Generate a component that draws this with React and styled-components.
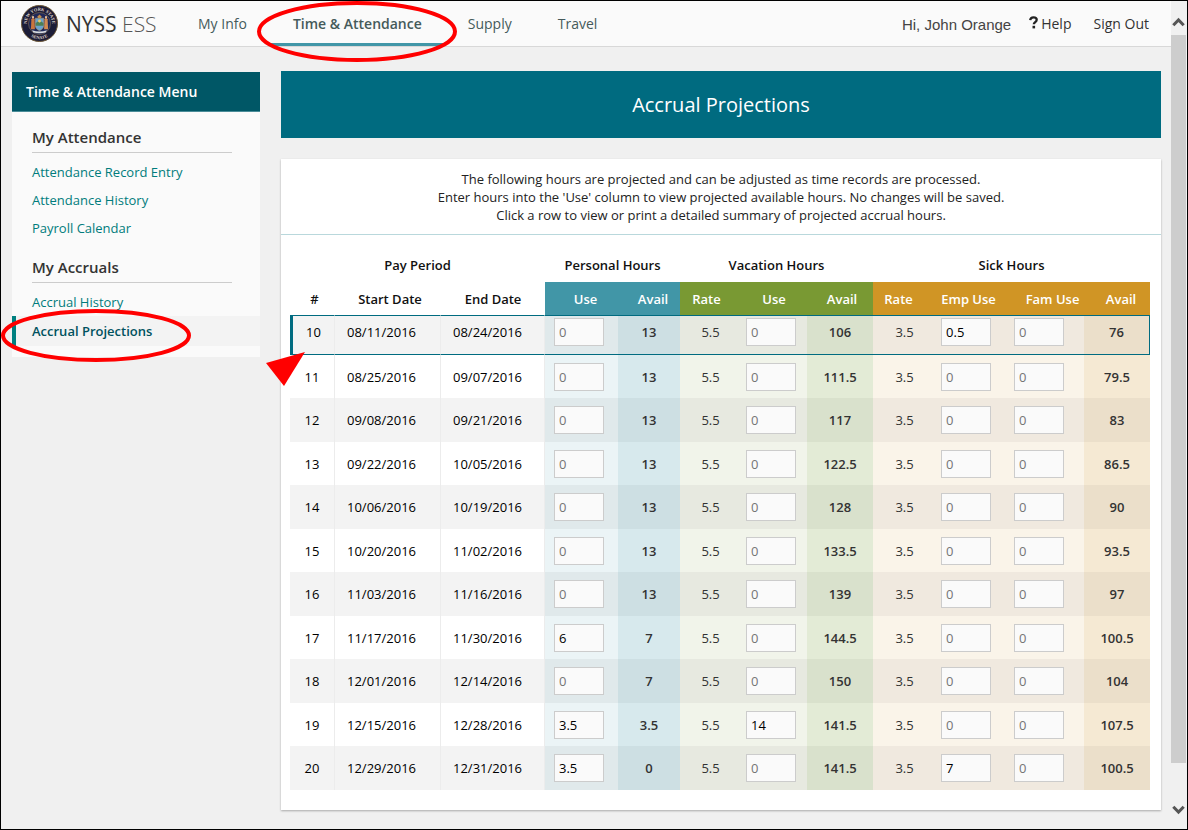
import React, { useState } from "react";
import styled, { createGlobalStyle, css } from "styled-components";

const GlobalStyle = createGlobalStyle`
  *, *::before, *::after { box-sizing: border-box; }
  body {
    margin: 0;
    background: #f0f0f0;
    color: #222;
    font: 13px/18px "Open Sans", "Liberation Sans", sans-serif;
  }
`;

const Frame = styled.div`
  display: flex;
  min-height: 100vh;
  padding-right: 1px;
  border: 1px solid #000;
  background: #f0f0f0;
`;

const Page = styled.div`
  flex: 1;
  min-width: 0;
`;

const TopBar = styled.header`
  display: flex;
  align-items: stretch;
  height: 46px;
  padding: 0 22px 0 20px;
  background: #fafafa;
  border-bottom: 1px solid #d8d8d8;
`;

const Brand = styled.a`
  display: flex;
  align-items: center;
  gap: 8px;
  width: 154px;
  color: #333;
  font-size: 21px;
  white-space: nowrap;
  text-decoration: none;
`;

const BrandThin = styled.span`
  font-weight: 300;
  color: #555;
`;

const Nav = styled.nav`
  display: flex;
  flex: 1;
`;

const NavLink = styled.a`
  position: relative;
  padding: 0 23px;
  line-height: 46px;
  font-size: 14px;
  color: #455a5a;
  text-decoration: none;
  white-space: nowrap;
  ${({ $active }) =>
    $active &&
    css`
      font-weight: 600;
      box-shadow: inset 0 -3px 0 #4196a7;
    `}
`;

const UserLinks = styled.div`
  display: flex;
  gap: 18px;
  line-height: 46px;
  font-size: 14px;
  white-space: nowrap;
`;

const Greeting = styled.span`
  color: #444;
  font: 15px/48px "Liberation Sans", Arial, sans-serif;
`;

const UserLink = styled.a`
  display: flex;
  gap: 3px;
  color: #333;
  text-decoration: none;
  & + & { margin-left: 4px; }
`;

const HelpIcon = styled.svg`
  margin-top: 15px;
`;

const Body = styled.div`
  display: flex;
  align-items: flex-start;
  gap: 21px;
  padding: 24px 10px 19px 11px;
`;

const Sidebar = styled.aside`
  flex: 0 0 248px;
  margin-top: 1px;
  padding-bottom: 11px;
  background: #fafafa;
`;

const MenuTitle = styled.h2`
  margin: 0;
  padding: 0 14px;
  font-size: 14px;
  line-height: 39px;
  font-weight: 600;
  color: #fff;
  background: #005766;
  border-bottom: 1px solid #4a8c98;
`;

const MenuHeading = styled.h3`
  margin: 12px 28px 5px 20px;
  padding-bottom: 2px;
  font-size: 15px;
  line-height: 26px;
  font-weight: 600;
  color: #333;
  border-bottom: 1px solid #ccc;
`;

const MenuList = styled.ul`
  margin: 0;
  padding: 0;
  list-style: none;
`;

const MenuItem = styled.li`
  position: relative;
`;

const MenuLink = styled.a`
  display: block;
  padding-left: 20px;
  line-height: 28px;
  color: #007c7c;
  text-decoration: none;
  ${({ $active }) =>
    $active &&
    css`
      padding-left: 16px;
      line-height: 30px;
      font-weight: 600;
      color: #00525f;
      background: #f3f3f3;
      border-left: 4px solid #008080;
    `}
`;

const Annotation = styled.svg`
  position: absolute;
  left: ${({ $left }) => $left}px;
  top: ${({ $top }) => $top}px;
  z-index: 2;
  pointer-events: none;
`;

const Main = styled.main`
  flex: 1;
  min-width: 0;
`;

const PageTitle = styled.h1`
  margin: 0 0 21px;
  font-size: 20px;
  line-height: 67px;
  font-weight: 400;
  text-align: center;
  color: #fff;
  background: #006b80;
`;

const Card = styled.section`
  padding-bottom: 20px;
  background: #fff;
  box-shadow: 0 1px 2px rgba(0, 0, 0, 0.3);
`;

const Intro = styled.p`
  margin: 0;
  padding: 11px 10px 10px;
  text-align: center;
  border-bottom: 1px solid #b9d8dc;
`;

const TableWrap = styled.div`
  padding: 13px 11px 0 9px;
`;

const Table = styled.table`
  width: 100%;
  table-layout: fixed;
  border-collapse: separate;
  border-spacing: 0;
`;

const GroupHead = styled.th`
  height: 34px;
  padding: 0;
  font-weight: 600;
  color: #111;
`;

const headColors = {
  personal: "#4196a7",
  vacation: "#799933",
  sick: "#d09525",
};

const ColumnHead = styled.th`
  height: 33px;
  padding: 0 ${({ $outdent }) => $outdent || 0}px 0 ${({ $indent }) => $indent || 0}px;
  font-weight: 600;
  white-space: nowrap;
  color: ${({ $group }) => ($group ? "#fff" : "#111")};
  background: ${({ $group }) => headColors[$group] || "transparent"};
`;

// Each tint holds the light shade and the striped shade.
const tints = {
  plain: ["#ffffff", "#f3f3f3"],
  personal: ["#ebf4f6", "#e0e9eb"],
  personalAvail: ["#d7e9ed", "#cddfe3"],
  vacation: ["#f1f4ea", "#e7e9e0"],
  vacationAvail: ["#e3ebd6", "#d9e1cc"],
  sick: ["#faf4e9", "#f0e9df"],
  sickAvail: ["#f5e9d3", "#ebdfca"],
};

const Cell = styled.td`
  height: 43px;
  padding: 0;
  text-align: center;
  color: #333;
  background: ${({ $tint }) => tints[$tint][0]};
  ${({ $tint }) => $tint === "plain" && "color: #000; border-right: 1px solid #ececec;"}
  ${({ $date }) => $date && "padding-left: 12px; text-align: left;"}
  ${({ $input }) => $input && "padding-left: 9px; text-align: left;"}
  ${({ $rate }) => $rate && "padding-left: 4px;"}
  ${({ $strong }) => $strong && "font-weight: 600;"}
  tr:nth-child(odd) > & {
    height: 44px;
    background: ${({ $tint }) => tints[$tint][1]};
  }
`;

const Row = styled.tr`
  cursor: pointer;
  ${({ $selected }) =>
    $selected &&
    css`
      &&&:nth-child(odd) > ${Cell} {
        height: 40px;
        padding-bottom: 6px;
        border-top: 1px solid #006b80;
        border-bottom: 1px solid #006b80;
      }
      && > ${Cell}:first-child {
        position: relative;
        border-left: 3px solid #006b80;
      }
      && > ${Cell}:last-child { border-right: 1px solid #006b80; }
    `}
`;

const HoursInput = styled.input`
  display: block;
  width: 50px;
  height: 28px;
  padding: 0 4px;
  font: inherit;
  color: #000;
  background: #fafafa;
  border: 1px solid #ccc;
  border-radius: 0;
  &::placeholder { color: #757575; opacity: 1; }
`;

const ScrollTrack = styled.div`
  display: flex;
  flex-direction: column;
  width: 15px;
  background: #f0f0f0;
`;

const ScrollArrow = styled.button`
  display: flex;
  align-items: center;
  justify-content: center;
  width: 15px;
  height: 34px;
  padding: ${({ $up }) => ($up ? "8px 0 0" : "0 0 4px")};
  border: 0;
  background: none;
`;

const ScrollThumb = styled.div`
  flex: 1;
  margin-bottom: 32px;
  background: #cdcdcd;
`;

const columns = [
  { label: "#", width: 45, indent: 4 },
  { label: "Start Date", width: 106, indent: 4 },
  { label: "End Date", width: 104 },
  { label: "Use", width: 73, group: "personal", indent: 8 },
  { label: "Avail", width: 62, group: "personal", indent: 8 },
  { label: "Rate", width: 57, group: "vacation", outdent: 4 },
  { label: "Use", width: 70, group: "vacation", indent: 4 },
  { label: "Avail", width: 66, group: "vacation", indent: 4 },
  { label: "Rate", width: 59, group: "sick", outdent: 8 },
  { label: "Emp Use", width: 73, group: "sick" },
  { label: "Fam Use", width: 79, group: "sick", indent: 16 },
  { label: "Avail", width: 66, group: "sick", indent: 8 },
];

// period, start, end, personal use, personal avail, vacation use, vacation avail, employee sick use, sick avail
const periods = [
  [10, "08/11/2016", "08/24/2016", "", "13", "", "106", "0.5", "76"],
  [11, "08/25/2016", "09/07/2016", "", "13", "", "111.5", "", "79.5"],
  [12, "09/08/2016", "09/21/2016", "", "13", "", "117", "", "83"],
  [13, "09/22/2016", "10/05/2016", "", "13", "", "122.5", "", "86.5"],
  [14, "10/06/2016", "10/19/2016", "", "13", "", "128", "", "90"],
  [15, "10/20/2016", "11/02/2016", "", "13", "", "133.5", "", "93.5"],
  [16, "11/03/2016", "11/16/2016", "", "13", "", "139", "", "97"],
  [17, "11/17/2016", "11/30/2016", "6", "7", "", "144.5", "", "100.5"],
  [18, "12/01/2016", "12/14/2016", "", "7", "", "150", "", "104"],
  [19, "12/15/2016", "12/28/2016", "3.5", "3.5", "14", "141.5", "", "107.5"],
  [20, "12/29/2016", "12/31/2016", "3.5", "0", "", "141.5", "7", "100.5"],
];

function Seal() {
  return (
    <svg width="37" height="37" viewBox="0 0 37 37" role="img" aria-label="New York State Senate seal">
      <defs>
        <path id="sealTop" d="M6.600 22.900a12.700 12.700 0 1 1 23.800 0" />
        <path id="sealBottom" d="M2.900 18.500a15.600 15.600 0 0 0 31.200 0" />
      </defs>
      <circle cx="18.500" cy="18.500" r="18" fill="#1c1d38" stroke="#6b5636" />
      <circle cx="18.500" cy="18.500" r="11" fill="#20295a" stroke="#8c7650" strokeWidth="0.600" />
      <g fill="#e2dccf" fontFamily="Liberation Serif, serif" fontWeight="700" fontSize="4.500" textAnchor="middle">
        <text><textPath href="#sealTop" startOffset="50%">NEW YORK STATE</textPath></text>
        <text><textPath href="#sealBottom" startOffset="50%">SENATE</textPath></text>
      </g>
      <path d="M14.300 13.200h8.400v7.400c0 2.600-2.200 4.200-4.200 5.200-2-1-4.200-2.600-4.200-5.200z" fill="#6ba3cf" stroke="#c5a264" strokeWidth="0.500" />
      <path d="M14.600 18.200l2-1.600 1.900 1 2-1.200 2 1.800v2.600h-7.900z" fill="#4d7f55" />
      <circle cx="18.500" cy="16" r="1.400" fill="#f0c75e" />
      <path d="M16.200 11.800l2.300-2.300 2.300 2.300-1 1.200h-2.600z" fill="#c58d48" />
      <path d="M10.400 14.200l1.600-1.600 1.500 1.600.4 10h-4z" fill="#c8753e" />
      <path d="M23.500 14.200l1.500-1.600 1.600 1.600.5 10h-4z" fill="#d18a52" />
      <circle cx="12" cy="12.200" r="1.100" fill="#edc7a0" />
      <circle cx="25" cy="12.200" r="1.100" fill="#edc7a0" />
      <path d="M11 25.200q7.500 2.600 15 0l-1.400 2.200q-6.100 1.600-12.200 0z" fill="#d8dbe0" />
    </svg>
  );
}

function Chevron({ up }) {
  return (
    <svg width="13" height="10" viewBox="0 0 13 10" aria-hidden="true">
      <path d={up ? "M1.300 8.300L6.500 3l5.200 5.300" : "M1.300 1.700l5.200 5.300 5.200-5.300"} fill="none" stroke="#555" strokeWidth="3" />
    </svg>
  );
}

function HelpMark() {
  return (
    <HelpIcon width="9" height="14" viewBox="0 0 9 14" aria-hidden="true">
      <path d="M1.200 4.100C1.400 2.200 2.600 1.300 4.500 1.300c2 0 3.200 1 3.200 2.500 0 2.200-2.900 2.400-2.900 4.500" fill="none" stroke="#222" strokeWidth="2.300" />
      <rect x="3.500" y="9.800" width="2.600" height="2.600" fill="#222" />
    </HelpIcon>
  );
}

function HoursCell({ tint, value, label }) {
  const [hours, setHours] = useState(value);
  return (
    <Cell $tint={tint} $input>
      <HoursInput
        type="text"
        placeholder="0"
        aria-label={label}
        value={hours}
        onChange={(e) => setHours(e.target.value)}
      />
    </Cell>
  );
}

function PeriodRow({ data, selected }) {
  const [num, start, end, pUse, pAvail, vUse, vAvail, sUse, sAvail] = data;
  return (
    <Row $selected={selected}>
      <Cell $tint="plain">
        {num}
        {selected && (
          <Annotation $left={-27} $top={36} width="40" height="36" viewBox="0 0 40 36" aria-hidden="true">
            <path d="M0 11L39 0 18 34z" fill="#f00" />
          </Annotation>
        )}
      </Cell>
      <Cell $tint="plain" $date>{start}</Cell>
      <Cell $tint="plain" $date>{end}</Cell>
      <HoursCell tint="personal" value={pUse} label={`Personal hours used, period ${num}`} />
      <Cell $tint="personalAvail" $strong>{pAvail}</Cell>
      <Cell $tint="vacation" $rate>5.5</Cell>
      <HoursCell tint="vacation" value={vUse} label={`Vacation hours used, period ${num}`} />
      <Cell $tint="vacationAvail" $strong>{vAvail}</Cell>
      <Cell $tint="sick" $rate>3.5</Cell>
      <HoursCell tint="sick" value={sUse} label={`Employee sick hours used, period ${num}`} />
      <HoursCell tint="sick" value="" label={`Family sick hours used, period ${num}`} />
      <Cell $tint="sickAvail" $strong>{sAvail}</Cell>
    </Row>
  );
}

export default function App() {
  return (
    <>
      <GlobalStyle />
      <Frame>
        <Page>
          <TopBar>
            <Brand href="#">
              <Seal />
              <span>NYSS <BrandThin>ESS</BrandThin></span>
            </Brand>
            <Nav>
              <NavLink href="#">My Info</NavLink>
              <NavLink href="#" $active>
                Time &amp; Attendance
                <Annotation $left={-13} $top={0} width="200" height="61" viewBox="0 0 200 61" aria-hidden="true">
                  <ellipse cx="100" cy="30.500" rx="98" ry="28.500" fill="none" stroke="#f00" strokeWidth="4" />
                </Annotation>
              </NavLink>
              <NavLink href="#">Supply</NavLink>
              <NavLink href="#">Travel</NavLink>
            </Nav>
            <UserLinks>
              <Greeting>Hi, John Orange</Greeting>
              <UserLink href="#"><HelpMark />Help</UserLink>
              <UserLink href="#">Sign Out</UserLink>
            </UserLinks>
          </TopBar>
          <Body>
            <Sidebar>
              <MenuTitle>Time &amp; Attendance Menu</MenuTitle>
              <MenuHeading>My Attendance</MenuHeading>
              <MenuList>
                <MenuItem><MenuLink href="#">Attendance Record Entry</MenuLink></MenuItem>
                <MenuItem><MenuLink href="#">Attendance History</MenuLink></MenuItem>
                <MenuItem><MenuLink href="#">Payroll Calendar</MenuLink></MenuItem>
              </MenuList>
              <MenuHeading>My Accruals</MenuHeading>
              <MenuList>
                <MenuItem><MenuLink href="#">Accrual History</MenuLink></MenuItem>
                <MenuItem>
                  <MenuLink href="#" $active>Accrual Projections</MenuLink>
                  <Annotation $left={-11} $top={-7} width="190" height="53" viewBox="0 0 190 53" aria-hidden="true">
                    <ellipse cx="95" cy="26.500" rx="93" ry="24.500" fill="none" stroke="#f00" strokeWidth="4" />
                  </Annotation>
                </MenuItem>
              </MenuList>
            </Sidebar>
            <Main>
              <PageTitle>Accrual Projections</PageTitle>
              <Card>
                <Intro>
                  The following hours are projected and can be adjusted as time records are processed.<br />
                  Enter hours into the 'Use' column to view projected available hours. No changes will be saved.<br />
                  Click a row to view or print a detailed summary of projected accrual hours.
                </Intro>
                <TableWrap>
                  <Table>
                    <colgroup>
                      {columns.map((c, i) => <col key={i} width={c.width} />)}
                    </colgroup>
                    <thead>
                      <tr>
                        <GroupHead colSpan={3} scope="colgroup">Pay Period</GroupHead>
                        <GroupHead colSpan={2} scope="colgroup">Personal Hours</GroupHead>
                        <GroupHead colSpan={3} scope="colgroup">Vacation Hours</GroupHead>
                        <GroupHead colSpan={4} scope="colgroup">Sick Hours</GroupHead>
                      </tr>
                      <tr>
                        {columns.map((c, i) => (
                          <ColumnHead key={i} scope="col" $group={c.group} $indent={c.indent} $outdent={c.outdent}>
                            {c.label}
                          </ColumnHead>
                        ))}
                      </tr>
                    </thead>
                    <tbody>
                      {periods.map((p) => <PeriodRow key={p[0]} data={p} selected={p[0] === 10} />)}
                    </tbody>
                  </Table>
                </TableWrap>
              </Card>
            </Main>
          </Body>
        </Page>
        <ScrollTrack>
          <ScrollArrow $up aria-label="Scroll up"><Chevron up /></ScrollArrow>
          <ScrollThumb />
          <ScrollArrow aria-label="Scroll down"><Chevron /></ScrollArrow>
        </ScrollTrack>
      </Frame>
    </>
  );
}
